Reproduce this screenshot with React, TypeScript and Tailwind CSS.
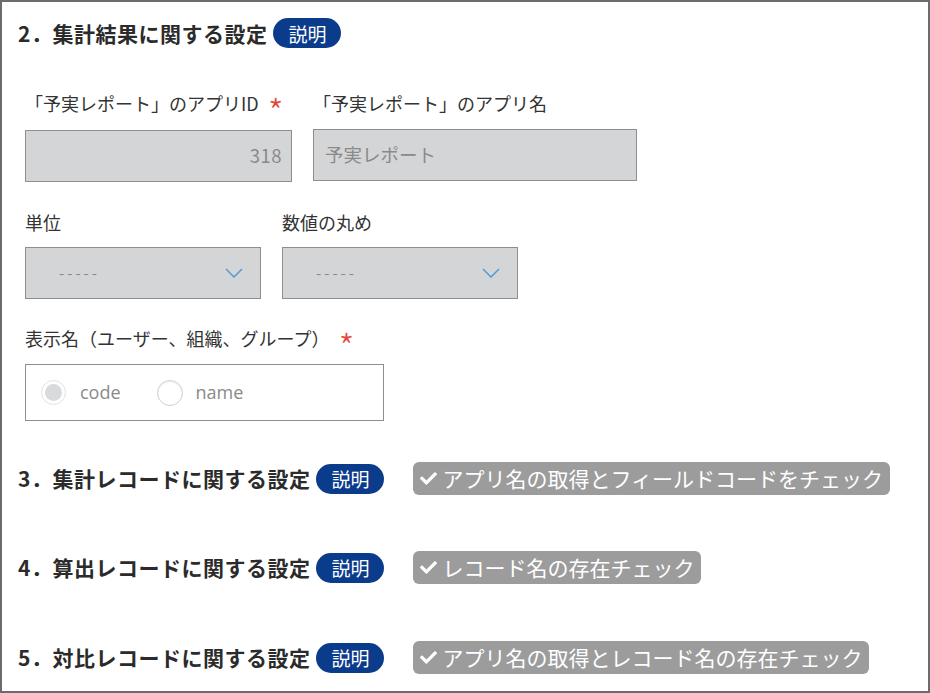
import { FaCheck } from "react-icons/fa";

const jp = { fontFamily: '"Noto Sans CJK JP", "Noto Sans", sans-serif' };

function Badge() {
  return (
    <span className="inline-flex h-[30px] w-[68px] items-center justify-center rounded-full bg-[#0b3c8c] text-[19px] leading-none text-white">
      説明
    </span>
  );
}

function CheckTag({ text }: { text: string }) {
  return (
    <span className="ml-[29px] inline-flex h-[33px] items-center gap-[5px] rounded-[6px] bg-[#9c9c9c] pl-[7px] pr-[7px] text-[21px] leading-none text-white">
      <FaCheck className="h-[17px] w-[17px]" />
      {text}
    </span>
  );
}

function Heading({ no, title, check }: { no: string; title: string; check?: string }) {
  return (
    <div className="flex h-[33px] items-center">
      <h2 className="text-[21px] font-bold leading-none tracking-[0.5px] text-[#2b2b2b]">
        {no}．{title}
      </h2>
      <span className="ml-[6px]">
        <Badge />
      </span>
      {check && <CheckTag text={check} />}
    </div>
  );
}

function Req() {
  return <span className="relative top-[7px] ml-[9px] text-[36px] font-light leading-none text-[#e5483c]">*</span>;
}

function Chevron() {
  return (
    <svg width="18" height="10" viewBox="0 0 18 10" fill="none" stroke="#5b9bd1" strokeWidth="1.6">
      <path d="M1 1 L9 9 L17 1" />
    </svg>
  );
}

function SelectBox() {
  return (
    <div className="flex h-[52px] w-[236px] items-center justify-between border border-[#8e8e8e] bg-[#d4d5d7] pl-[33px] pr-[17px]">
      <span className="text-[15px] tracking-[3px] text-[#8a8a8a]">-----</span>
      <Chevron />
    </div>
  );
}

export default function App() {
  return (
    <div
      style={jp}
      className="h-[693px] w-[930px] overflow-hidden border-2 border-[#6c6c6c] bg-white pl-4 pt-4"
    >
      <div className="flex h-[30px] items-center">
        <h2 className="text-[21px] font-bold leading-none tracking-[0.5px] text-[#2b2b2b]">2．集計結果に関する設定</h2>
        <span className="ml-[6px]">
          <Badge />
        </span>
      </div>

      <div className="ml-[7px] text-[#333]">
        <div className="mt-[43px] flex gap-[21px]">
          <div>
            <div className="flex h-6 items-center text-[18px]">
              「予実レポート」のアプリID
              <Req />
            </div>
            <div className="mt-[15px] flex h-[52px] w-[267px] items-center justify-end border border-[#8e8e8e] bg-[#d4d5d7] pr-[9px] text-[18.5px] tracking-[0.5px] text-[#8a8a8a]">
              318
            </div>
          </div>
          <div>
            <div className="flex h-6 items-center text-[18px]">「予実レポート」のアプリ名</div>
            <div className="mt-[14px] flex h-[52px] w-[324px] items-center border border-[#8e8e8e] bg-[#d4d5d7] pl-[11px] text-[18.5px] text-[#8a8a8a]">
              予実レポート
            </div>
          </div>
        </div>

        <div className="mt-[28px] flex gap-[21px]">
          <div>
            <div className="flex h-6 items-center text-[18px]">単位</div>
            <div className="mt-[13px]">
              <SelectBox />
            </div>
          </div>
          <div>
            <div className="flex h-6 items-center text-[18px]">数値の丸め</div>
            <div className="mt-[13px]">
              <SelectBox />
            </div>
          </div>
        </div>

        <div className="mt-[27px] flex h-6 items-center text-[18px]">
          表示名（ユーザー、組織、グループ）
          <Req />
        </div>
        <div className="mt-[14px] flex h-[57px] w-[359px] items-center border border-[#8e8e8e] pl-[15px] text-[18px] text-[#8a8a8a]">
          <span className="flex h-[25px] w-[25px] items-center justify-center rounded-full border border-[#e2e2e2] bg-white">
            <span className="h-[17px] w-[17px] rounded-full bg-[#d9dadc]" />
          </span>
          <span className="ml-[14px]" style={{ fontFamily: '"Open Sans", sans-serif' }}>
            code
          </span>
          <span className="ml-[36px] h-[26px] w-[26px] rounded-full border border-[#d0d0d0] bg-white shadow-[inset_0_1px_2px_rgba(0,0,0,0.08)]" />
          <span className="ml-[13px]" style={{ fontFamily: '"Open Sans", sans-serif' }}>
            name
          </span>
        </div>
      </div>

      <div className="mt-[41px]">
        <Heading no="3" title="集計レコードに関する設定" check="アプリ名の取得とフィールドコードをチェック" />
      </div>
      <div className="mt-[56px]">
        <Heading no="4" title="算出レコードに関する設定" check="レコード名の存在チェック" />
      </div>
      <div className="mt-[57px]">
        <Heading no="5" title="対比レコードに関する設定" check="アプリ名の取得とレコード名の存在チェック" />
      </div>
    </div>
  );
}
